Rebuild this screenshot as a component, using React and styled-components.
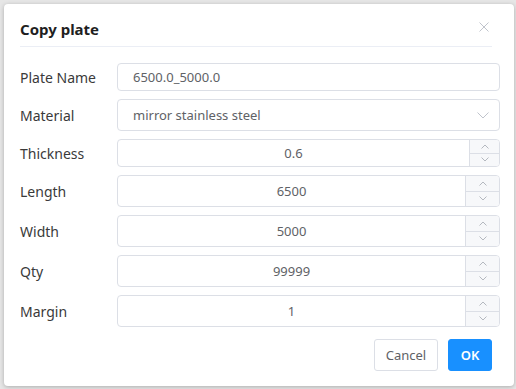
import React from "react";
import styled, { createGlobalStyle } from "styled-components";

const GlobalStyle = createGlobalStyle`
  html, body {
    margin: 0;
    padding: 0;
    background: #e6e6e6;
  }
  body {
    font-family: "Noto Sans", "Open Sans", sans-serif;
    overflow: hidden;
  }
  * {
    box-sizing: border-box;
  }
`;

const Page = styled.div`
  padding: 4px 0 0 4px;
  height: 389px;
`;

const Modal = styled.div`
  width: 510px;
  height: 382px;
  background: #fff;
  border-radius: 4px;
  box-shadow: 0 1px 4px rgba(0, 0, 0, 0.25);
  padding: 0 0 0 16px;
`;

const Header = styled.div`
  width: 472px;
  height: 43px;
  padding-top: 8px;
  display: flex;
  align-items: center;
  justify-content: space-between;
  border-bottom: 1px solid #ebeef5;
`;

const Title = styled.div`
  font-size: 15px;
  font-weight: 700;
  color: #1f1f1f;
`;

const Close = styled.button`
  border: 0;
  background: transparent;
  padding: 0;
  margin-right: 3px;
  margin-top: -4px;
  width: 10px;
  height: 10px;
  display: flex;
  cursor: pointer;
`;

const Form = styled.div`
  width: 480px;
  padding-top: 16px;
  display: flex;
  flex-direction: column;
  gap: 8px;
`;

const Row = styled.div`
  display: grid;
  grid-template-columns: 97px 1fr;
  align-items: center;
  height: ${(p) => p.$h}px;
`;

const Label = styled.label`
  font-size: 14px;
  color: #3a3a3a;
`;

const Field = styled.div`
  height: 100%;
  border: 1px solid #dcdfe6;
  border-radius: 4px;
  display: flex;
  align-items: center;
  font-size: 13px;
  color: #606266;
  overflow: hidden;
`;

const TextValue = styled.span`
  flex: 1;
  padding-left: 15px;
`;

const NumValue = styled.span`
  flex: 1;
  text-align: center;
`;

const Chevron = styled.span`
  width: 30px;
  display: flex;
  justify-content: center;
  padding-right: 2px;
`;

const Stepper = styled.div`
  width: ${(p) => p.$w}px;
  height: 100%;
  border-left: 1px solid #dcdfe6;
  background: #f7f8fa;
  display: flex;
  flex-direction: column;
`;

const Step = styled.div`
  flex: 1;
  display: flex;
  align-items: center;
  justify-content: center;
  & + & {
    border-top: 1px solid #dcdfe6;
  }
`;

const Footer = styled.div`
  width: 472px;
  margin-top: 12px;
  display: flex;
  justify-content: flex-end;
  gap: 10px;
`;

const Button = styled.button`
  height: 32px;
  width: ${(p) => (p.$primary ? 44 : 64)}px;
  padding: 0;
  border-radius: 3px;
  font-family: inherit;
  font-size: 13px;
  border: 1px solid ${(p) => (p.$primary ? "#1890ff" : "#dcdfe6")};
  background: ${(p) => (p.$primary ? "#1890ff" : "#fff")};
  color: ${(p) => (p.$primary ? "#fff" : "#606266")};
  font-weight: ${(p) => (p.$primary ? 600 : 400)};
  cursor: pointer;
`;

const Arrow = ({ up }) => (
  <svg width="8" height="5" viewBox="0 0 8 5">
    <path
      d={up ? "M0.5 4.5 L4 1 L7.5 4.5" : "M0.5 0.5 L4 4 L7.5 0.5"}
      fill="none"
      stroke="#b4b8bf"
      strokeWidth="1"
    />
  </svg>
);

const numberRows = [
  { label: "Thickness", value: "0.6", h: 28, w: 30 },
  { label: "Length", value: "6500", h: 32, w: 34 },
  { label: "Width", value: "5000", h: 32, w: 34 },
  { label: "Qty", value: "99999", h: 32, w: 34 },
  { label: "Margin", value: "1", h: 32, w: 34 },
];

export default function App() {
  return (
    <Page>
      <GlobalStyle />
      <Modal>
        <Header>
          <Title>Copy plate</Title>
          <Close aria-label="close">
            <svg width="10" height="10" viewBox="0 0 10 10">
              <path d="M0.5 0.5 L9.5 9.5 M9.5 0.5 L0.5 9.5" stroke="#c0c4cc" strokeWidth="1" />
            </svg>
          </Close>
        </Header>
        <Form>
          <Row $h={28}>
            <Label>Plate Name</Label>
            <Field>
              <TextValue>6500.0_5000.0</TextValue>
            </Field>
          </Row>
          <Row $h={32}>
            <Label>Material</Label>
            <Field>
              <TextValue>mirror stainless steel</TextValue>
              <Chevron>
                <svg width="12" height="7" viewBox="0 0 12 7">
                  <path d="M0.5 0.5 L6 6 L11.5 0.5" fill="none" stroke="#c0c4cc" strokeWidth="1" />
                </svg>
              </Chevron>
            </Field>
          </Row>
          {numberRows.map((r) => (
            <Row key={r.label} $h={r.h}>
              <Label>{r.label}</Label>
              <Field>
                <NumValue>{r.value}</NumValue>
                <Stepper $w={r.w}>
                  <Step>
                    <Arrow up />
                  </Step>
                  <Step>
                    <Arrow />
                  </Step>
                </Stepper>
              </Field>
            </Row>
          ))}
        </Form>
        <Footer>
          <Button>Cancel</Button>
          <Button $primary>OK</Button>
        </Footer>
      </Modal>
    </Page>
  );
}
